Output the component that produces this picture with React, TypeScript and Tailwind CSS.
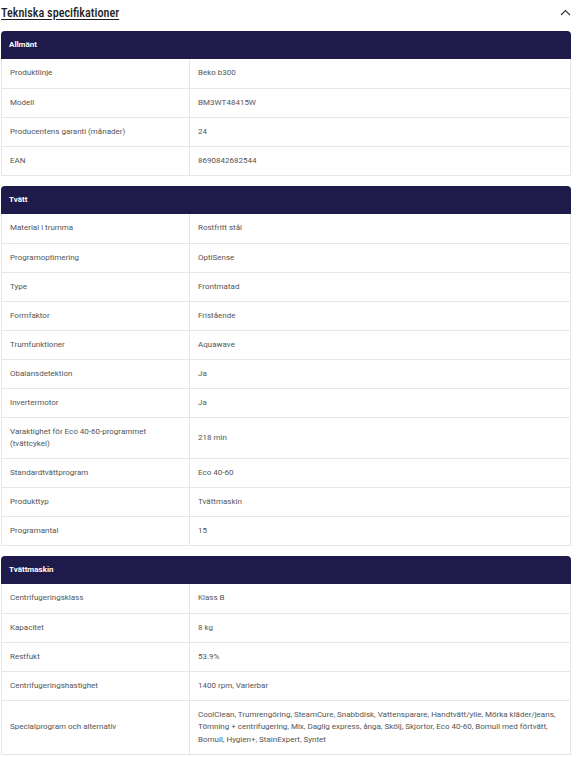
import React from "react";

type Row = [string, string];

const sections: { title: string; rows: Row[] }[] = [
  {
    title: "Allmänt",
    rows: [
      ["Produktlinje", "Beko b300"],
      ["Modell", "BM3WT48415W"],
      ["Producentens garanti (månader)", "24"],
      ["EAN", "8690842682544"],
    ],
  },
  {
    title: "Tvätt",
    rows: [
      ["Material i trumma", "Rostfritt stål"],
      ["Programoptimering", "OptiSense"],
      ["Type", "Frontmatad"],
      ["Formfaktor", "Fristående"],
      ["Trumfunktioner", "Aquawave"],
      ["Obalansdetektion", "Ja"],
      ["Invertermotor", "Ja"],
      ["Varaktighet för Eco 40-60-programmet (tvättcykel)", "218 min"],
      ["Standardtvättprogram", "Eco 40-60"],
      ["Produkttyp", "Tvättmaskin"],
      ["Programantal", "15"],
    ],
  },
  {
    title: "Tvättmaskin",
    rows: [
      ["Centrifugeringsklass", "Klass B"],
      ["Kapacitet", "8 kg"],
      ["Restfukt", "53.9%"],
      ["Centrifugeringshastighet", "1400 rpm, Varierbar"],
      [
        "Specialprogram och alternativ",
        "CoolClean, Trumrengöring, SteamCure, Snabbdisk, Vattensparare, Handtvätt/ylle, Mörka kläder/jeans, Tömning + centrifugering, Mix, Daglig express, ånga, Skölj, Skjortor, Eco 40-60, Bomull med förtvätt, Bomull, Hygien+, StainExpert, Syntet",
      ],
    ],
  },
];

export default function App() {
  return (
    <div className="w-[577px] h-[757px] bg-white overflow-hidden font-['Roboto',sans-serif]">
      <div className="flex items-center justify-between h-[25px] pl-[1px] pr-[5px]">
        <span className="font-['Roboto',sans-serif] font-stretch-condensed text-[12.2px] font-medium text-[#1f1f1f] underline underline-offset-2 decoration-1 leading-none pt-[1px]">
          Tekniska specifikationer
        </span>
        <svg width="11" height="7" viewBox="0 0 11 7" fill="none" className="mr-[1px] mt-[-1px]">
          <path d="M1 6L5.5 1.5L10 6" stroke="#333" strokeWidth="1.1" />
        </svg>
      </div>
      <div className="flex flex-col gap-[10px] pl-[1px] pt-[6px]">
        {sections.map((s) => (
          <div key={s.title} className="w-[570px]">
            <div className="h-[28px] bg-[#1e1b4b] rounded-t-[4px] flex items-center px-[8px]">
              <span className="text-white font-bold text-[8px]">{s.title}</span>
            </div>
            <div className="border-x border-b border-[#e6e6e6]">
              {s.rows.map(([k, v], i) => (
                <div
                  key={k}
                  className={`flex min-h-[29px] text-[8px] leading-[12.5px] text-[#555555] ${
                    i > 0 ? "border-t border-[#e6e6e6]" : ""
                  }`}
                >
                  <div className="w-[188px] shrink-0 flex items-center px-[8px] py-[7.5px] border-r border-[#e6e6e6]">
                    {k}
                  </div>
                  <div className="flex-1 flex items-center px-[8px] py-[7.5px]">{v}</div>
                </div>
              ))}
            </div>
          </div>
        ))}
      </div>
    </div>
  );
}
